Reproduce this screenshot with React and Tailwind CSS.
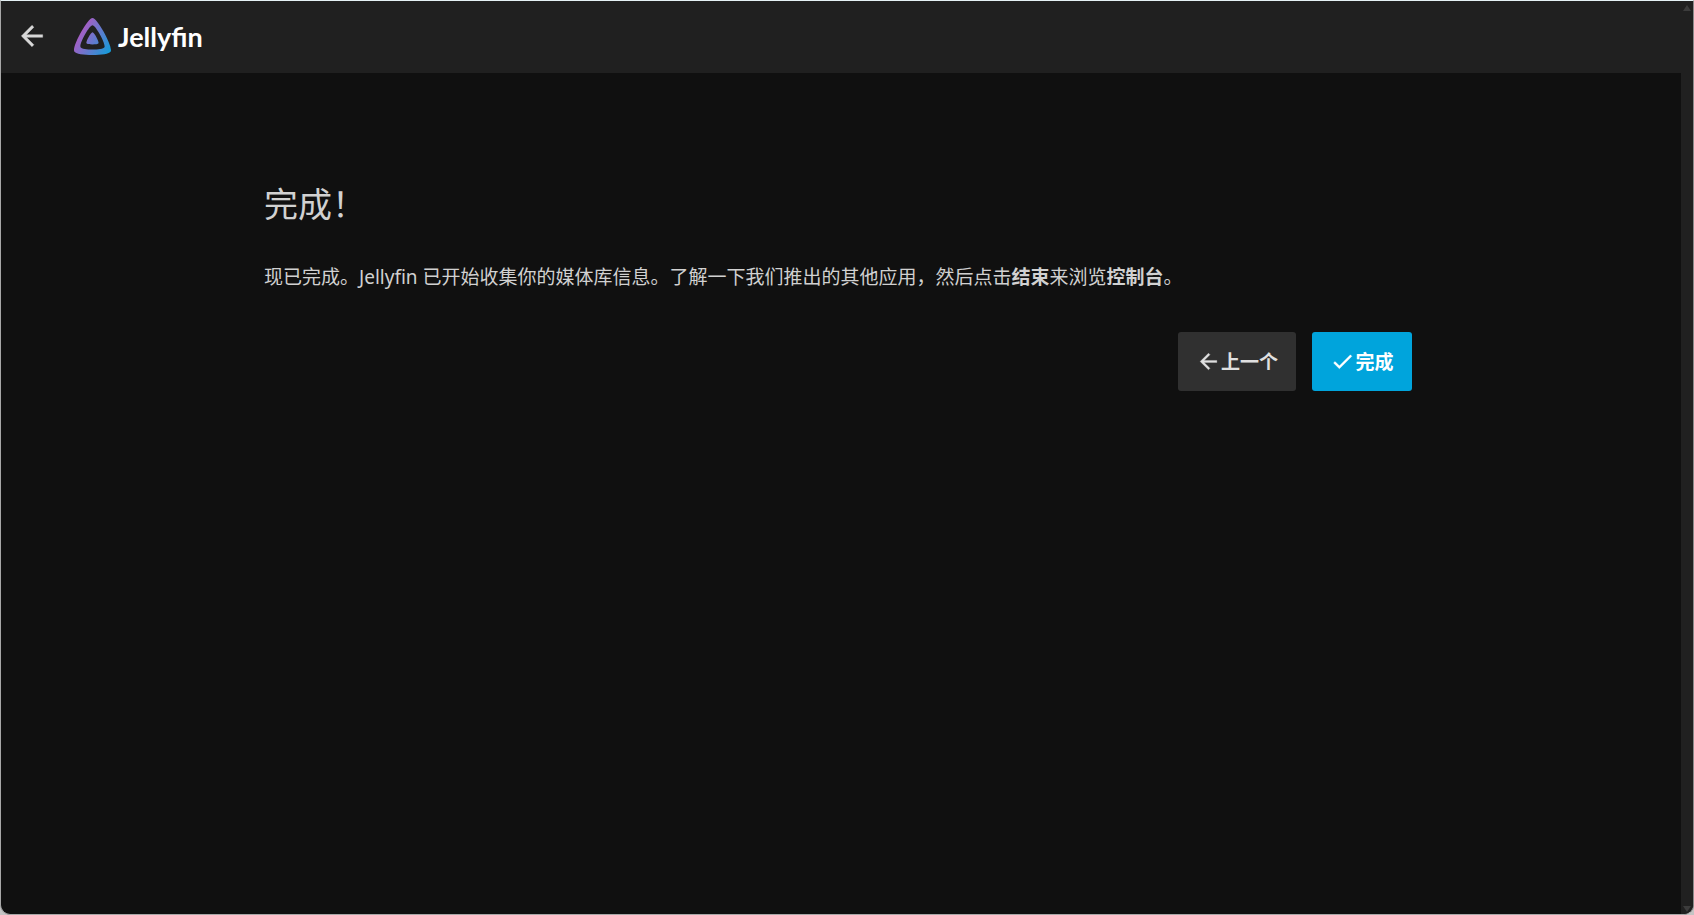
import React from 'react';

function Icon({ d, className }) {
  return (
    <svg viewBox="0 0 24 24" className={`fill-current stroke-current ${className}`} strokeWidth="0.3" aria-hidden="true">
      <path d={d} />
    </svg>
  );
}

const ARROW_BACK = 'M20 11H7.83l5.59-5.59L12 4l-8 8 8 8 1.41-1.41L7.83 13H20v-2z';
const CHECK = 'M9 16.17L4.83 12l-1.42 1.41L9 19 21 7l-1.41-1.41z';

function Logo() {
  return (
    <a href="#home" className="flex items-center gap-[7px] text-white">
      <svg viewBox="56 56 400 400" className="size-[37px]" aria-hidden="true">
        <defs>
          <linearGradient id="brand" gradientUnits="userSpaceOnUse" x1="110.25" y1="213.3" x2="496.14" y2="436.09">
            <stop offset="0" stopColor="#AA5CC3" />
            <stop offset="1" stopColor="#00A4DC" />
          </linearGradient>
        </defs>
        <path fill="url(#brand)" d="M190.56 329.07c8.63 17.3 122.4 17.12 130.93 0 8.52-17.1-47.9-119.78-65.46-119.8-17.57 0-74.1 102.5-65.47 119.8z" />
        <path fill="url(#brand)" d="M58.75 417.03c25.97 52.15 368.86 51.55 394.55 0S308.93 56.08 256.03 56.08c-52.92 0-223.25 308.8-197.28 360.95zm68.04-45.25c-17.02-34.17 94.6-236.5 129.26-236.5 34.67 0 146.1 202.7 129.26 236.5-16.83 33.8-241.5 34.17-258.52 0z" />
      </svg>
      <span className="pt-px font-['Lato',sans-serif] text-[27px] leading-9 font-bold">Jellyfin</span>
    </a>
  );
}

function WizardButton({ icon, children, className }) {
  return (
    <button type="button" className={`flex h-[59px] min-w-[100px] items-center justify-center rounded-[3px] px-[18px] text-[19px] leading-7 font-bold ${className}`}>
      <Icon d={icon} className="size-[25px]" />
      {children}
    </button>
  );
}

function ScrollTrack() {
  return (
    <div className="flex w-3 shrink-0 flex-col items-center justify-between bg-[#202020] pt-1 pb-[2px]" aria-hidden="true">
      <svg viewBox="0 0 8 6" className="h-[6px] w-2"><path d="M4 0l4 6H0z" fill="#3c3c3c" /></svg>
      <svg viewBox="0 0 8 6" className="h-[6px] w-2"><path d="M0 0h8L4 6z" fill="#3c3c3c" /></svg>
    </div>
  );
}

export default function App() {
  return (
    <div className="min-h-screen bg-[#c4c4c4] font-['Noto_Sans','Noto_Sans_CJK_SC',sans-serif]" lang="zh-CN">
      <div className="flex min-h-screen overflow-hidden rounded-b-[10px] border border-t-[#e6f2f5] border-r-[#8a8a8a] border-b-[#a8a8a8] border-l-[#a8a8a8] bg-[#101010] text-[#d1d1d1]">
        <div className="flex-1">
          <header className="flex h-[72px] items-center gap-[26px] bg-[#202020] pb-[2px] pl-[15px]">
            <button type="button" aria-label="返回" className="text-[#d8d8d8]">
              <Icon d={ARROW_BACK} className="size-8" />
            </button>
            <Logo />
          </header>
          <main className="mx-auto max-w-[1154px] pt-[107px] pr-[6px]">
            <h1 className="text-[34px] leading-[48px]">完成！</h1>
            <p className="mt-[35px] text-[19px] leading-7">
              现已完成。Jellyfin 已开始收集你的媒体库信息。了解一下我们推出的其他应用，然后点击<b>结束</b>来浏览<b>控制台</b>。
            </p>
            <div className="mt-[41px] flex justify-end gap-4">
              <WizardButton icon={ARROW_BACK} className="bg-[#303030] text-[#e0e0e0]">上一个</WizardButton>
              <WizardButton icon={CHECK} className="bg-[#00a4dc] text-white">完成</WizardButton>
            </div>
          </main>
        </div>
        <ScrollTrack />
      </div>
    </div>
  );
}
